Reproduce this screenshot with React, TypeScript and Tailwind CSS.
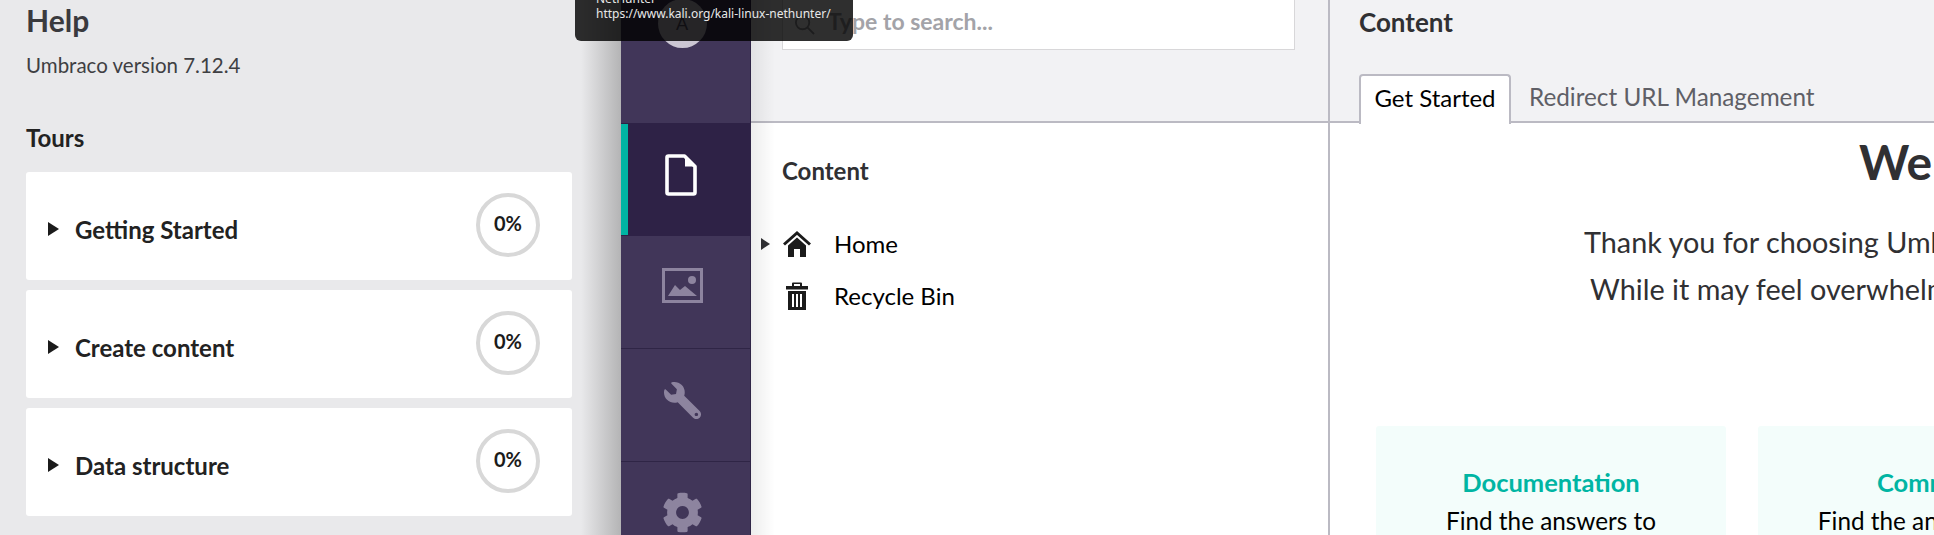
import React from 'react';
import { FaCog, FaWrench } from 'react-icons/fa';

const tours = ['Getting Started', 'Create content', 'Data structure'];

const TourCard: React.FC<{ title: string }> = ({ title }) => (
  <div className="h-[108px] bg-white rounded-[3px] flex items-start pl-[22px] pr-[32px]">
    <div className="mt-[50px] w-0 h-0 border-y-[7px] border-y-transparent border-l-[11px] border-l-[#1b1b1b]" />
    <span className="ml-[16px] mt-[43px] text-[24px] leading-[30px] font-bold text-[#222222]">{title}</span>
    <div className="ml-auto mt-[21px] w-[64px] h-[64px] rounded-full border-[4px] border-[#d8d8d8] flex items-center justify-center text-[20px] font-bold text-[#1b1b1b] pb-[5px]">
      0%
    </div>
  </div>
);

const HelpPanel: React.FC = () => (
  <aside className="relative w-[621px] shrink-0 bg-[#e9e9eb] pl-[26px] pr-[49px]">
    <h1 className="mt-[2px] text-[30px] leading-[36px] font-bold text-[#3a3a3e]">Help</h1>
    <p className="mt-[14px] text-[20.500px] leading-[26px] text-[#3f3f43]">Umbraco version 7.12.4</p>
    <h2 className="mt-[45px] text-[24px] leading-[30px] font-bold text-[#222222]">Tours</h2>
    <div className="mt-[19px] flex flex-col gap-[10px]">
      {tours.map((t) => (
        <TourCard key={t} title={t} />
      ))}
    </div>
    {/* shadow thrown by the umbraco window */}
    <div className="absolute top-0 right-0 bottom-0 w-[40px] bg-gradient-to-r from-transparent to-[#b4b4b5]" />
  </aside>
);

const Sidebar: React.FC = () => (
  <nav className="w-[130px] shrink-0 bg-[#413659] border-r border-[#2f2546] flex flex-col">
    <div className="h-[123px] shrink-0 flex justify-center pr-[7px]">
      <div className="mt-[-1px] w-[49px] h-[49px] rounded-full bg-[#cbc6d3] flex items-center justify-center text-[18px] text-[#5a5266]">
        A
      </div>
    </div>
    <div className="h-[113px] shrink-0 bg-[#2e2246] flex items-center">
      <div className="w-[7px] h-[111px] bg-[#00b5a3]" />
      <svg className="ml-[37px] mb-[10px]" width="32" height="42" viewBox="0 0 32 42" fill="none">
        <path d="M3.5 2h16L30 12.5V38.500a1.500 1.500 0 0 1-1.500 1.500h-25A1.500 1.500 0 0 1 2 38.500v-35A1.500 1.500 0 0 1 3.500 2z" stroke="#fff" strokeWidth="3.600" strokeLinejoin="round" />
        <path d="M20 2v10.500h10z" fill="#fff" />
      </svg>
    </div>
    <div className="h-[113px] shrink-0 border-b border-[#2f2546] flex items-center justify-center pr-[7px]">
      <svg className="mb-[13px]" width="41" height="35" viewBox="0 0 41 35" fill="none">
        <rect x="1.500" y="1.500" width="38" height="32" stroke="#8d849f" strokeWidth="3" />
        <circle cx="30" cy="12" r="4" fill="#8d849f" />
        <path d="M6 28L13 17l5 5 5-4 12 10z" fill="#8d849f" />
      </svg>
    </div>
    <div className="h-[113px] shrink-0 border-b border-[#2f2546] flex items-center justify-center pr-[7px]">
      <FaWrench className="-scale-x-100 mb-[10px]" size={37} color="#8d849f" />
    </div>
    <div className="flex-1 flex justify-center pt-[30px] pr-[7px]">
      <FaCog size={41} color="#8d849f" />
    </div>
  </nav>
);

const TreePane: React.FC = () => (
  <section className="relative w-[579px] shrink-0 border-r-2 border-[#bbbac3] bg-white">
    <div className="h-[123px] border-b-2 border-[#bbbac3] bg-[#f2f2f4] pl-[31px] pr-[33px]">
      <div className="h-[50px] border border-t-0 border-[#d8d7d9] bg-white flex items-center pl-[11px] pb-[6px]">
        <svg className="mt-[6px]" width="21" height="21" viewBox="0 0 22 22" fill="none" stroke="#9a9a9e" strokeWidth="2">
          <circle cx="9" cy="9" r="7" />
          <path d="M14 14l7 7" />
        </svg>
        <span className="ml-[13px] text-[23px] font-bold text-[#a3a3a8]">Type to search...</span>
      </div>
    </div>
    <h3 className="ml-[31px] mt-[33px] text-[24px] leading-[30px] font-bold text-[#303033]">Content</h3>
    <div className="mt-[43px] flex items-center h-[30px] pl-[10px]">
      <div className="w-0 h-0 border-y-[6px] border-y-transparent border-l-[9px] border-l-[#303033]" />
      <svg className="ml-[12px]" width="30" height="30" viewBox="0 0 30 28" fill="#1b1b1b">
        <path d="M2 14.500L15 3l13 11.500" fill="none" stroke="#1b1b1b" strokeWidth="3" />
        <path d="M6 15.500L15 7.500l9 8V27h-6v-8h-6v8H6z" />
      </svg>
      <span className="ml-[22px] text-[24px] leading-[30px] text-black">Home</span>
    </div>
    <div className="mt-[22px] flex items-center h-[30px] pl-[34px]">
      <svg width="24" height="30" viewBox="0 0 24 30" fill="#1b1b1b">
        <path d="M8 1.500h8a1 1 0 0 1 1 1V5h6v3.500H1V5h6V2.500a1 1 0 0 1 1-1zm1 1.500v2h6V3z" />
        <path fillRule="evenodd" d="M3 10h18v19H3zM7 13v13h2V13zm4 0v13h2V13zm4 0v13h2V13z" />
      </svg>
      <span className="ml-[25px] text-[24px] leading-[30px] text-black">Recycle Bin</span>
    </div>
    {/* soft edge coming off the dark sidebar */}
    <div className="absolute top-0 left-0 bottom-0 w-[24px] bg-gradient-to-r from-[#00000012] to-transparent" />
  </section>
);

const InfoCard: React.FC<{ title: string; text: string; titleClass?: string; textClass?: string }> = ({
  title,
  text,
  titleClass = '',
  textClass = '',
}) => (
  <div className="w-[350px] h-[200px] shrink-0 bg-[#f3fdfb] rounded-[3px] text-center whitespace-nowrap pt-[40px]">
    <h4 className={`text-[25.500px] leading-[32px] font-bold text-[#00b5a3] ${titleClass}`}>{title}</h4>
    <p className={`mt-[8px] text-[24.300px] leading-[30px] text-black ${textClass}`}>{text}</p>
  </div>
);

const ContentPane: React.FC = () => (
  <section className="flex-1 min-w-0 overflow-hidden bg-white">
    <div className="h-[123px] border-b-2 border-[#bbbac3] bg-[#f2f2f4] pl-[29px] relative">
      <h3 className="pt-[7px] text-[26px] leading-[30px] font-bold text-[#303033]">Content</h3>
      <div className="absolute left-[29px] top-[74px] flex items-start">
        <div className="h-[50px] w-[152px] pb-[4px] bg-white border-2 border-b-0 border-[#bbbac3] rounded-t-[4px] flex items-center justify-center text-[24px] text-black">
          Get Started
        </div>
        <div className="h-[48px] pb-[2px] ml-[18px] flex items-center whitespace-nowrap text-[24.300px] text-[#5f5f66]">
          Redirect URL Management
        </div>
      </div>
    </div>
    <div className="pl-[254px] whitespace-nowrap">
      <h2 className="mt-[10px] pl-[275px] text-[48px] leading-[58px] font-bold text-[#303033]">Welcome</h2>
      <p className="mt-[28px] text-[28.800px] leading-[47px] text-[#303033]">Thank you for choosing Umbraco</p>
      <p className="pl-[6px] text-[28.800px] leading-[47px] text-[#303033]">While it may feel overwhelming</p>
    </div>
    <div className="mt-[113px] ml-[46px] flex gap-[32px]">
      <InfoCard title="Documentation" text="Find the answers to" />
      <InfoCard title="Community" text="Find the answers or" titleClass="pl-[20px]" textClass="pr-[20px]" />
    </div>
  </section>
);

export default function App() {
  return (
    <div className="relative w-[1934px] h-[535px] overflow-hidden flex font-['Lato',sans-serif]">
      <HelpPanel />
      <Sidebar />
      <TreePane />
      <ContentPane />
      <div className="absolute left-[575px] top-0 w-[278px] h-[41px] bg-[#000000d0] rounded-b-[6px] pl-[21px] pr-[20px] font-['Noto_Sans',sans-serif] text-[12px] leading-[15px] text-[#e8e8e8] whitespace-nowrap overflow-hidden">
        <div className="mt-[-9px]">NetHunter</div>
        <div>https://www.kali.org/kali-linux-nethunter/</div>
      </div>
    </div>
  );
}
